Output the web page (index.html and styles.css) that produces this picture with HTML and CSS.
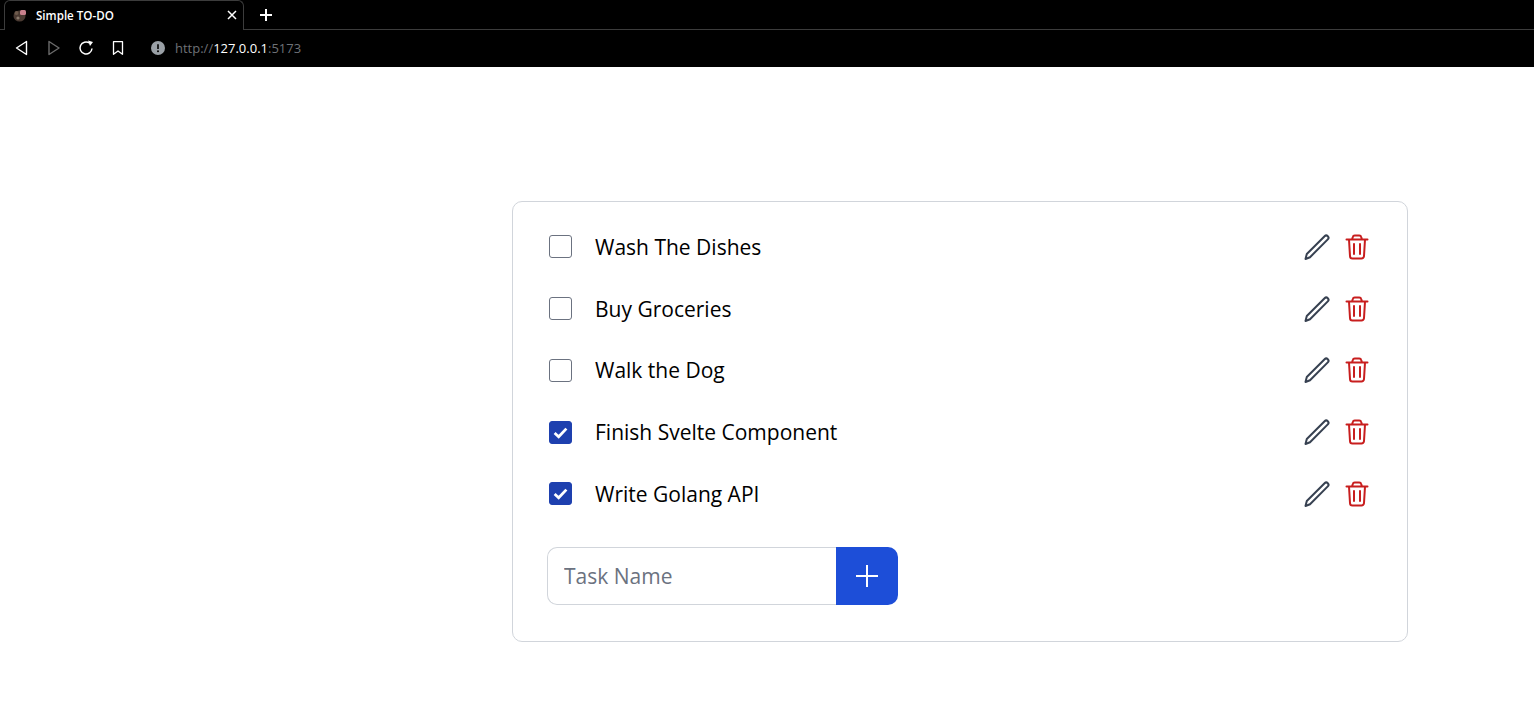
FILE: index.html

```html
<!DOCTYPE html>
<html lang="en">
<head>
<meta charset="UTF-8">
<meta name="viewport" content="width=device-width, initial-scale=1.0">
<title>Simple TO-DO</title>
<link rel="stylesheet" href="styles.css">
</head>
<body>

<!-- browser chrome -->
<div class="tabstrip">
    <div class="tab">
        <svg class="favicon" viewBox="0 0 15 14" width="15" height="14">
            <ellipse cx="6.5" cy="8" rx="6" ry="5.5" fill="#4a3a32"/>
            <circle cx="3.5" cy="5" r="2" fill="#6d5a4c"/>
            <rect x="7" y="2" width="6" height="5" rx="1.5" fill="#c9808c"/>
            <circle cx="5" cy="10" r="1.6" fill="#8a7a6c"/>
        </svg>
        <span class="tab-title">Simple TO-DO</span>
        <svg class="tab-close" viewBox="0 0 10 10" width="10" height="10">
            <path d="M1 1L9 9M9 1L1 9" stroke="#fff" stroke-width="1.5"/>
        </svg>
    </div>
    <svg class="new-tab" viewBox="0 0 14 14" width="14" height="14">
        <path d="M7 1V13M1 7H13" stroke="#fff" stroke-width="2"/>
    </svg>
</div>
<div class="toolbar">
    <svg class="nav-icon" viewBox="0 0 16 16" width="16" height="16">
        <path d="M12.5 1.5V14.5L2.5 8Z" fill="none" stroke="#fff" stroke-width="1.4" stroke-linejoin="round"/>
    </svg>
    <svg class="nav-icon" viewBox="0 0 16 16" width="16" height="16">
        <path d="M3 1.5V14.5L13 8Z" fill="none" stroke="#6b6b6b" stroke-width="1.4" stroke-linejoin="round"/>
    </svg>
    <svg class="nav-icon" viewBox="0 0 16 16" width="16" height="16">
        <path d="M14 8.5A6 6 0 1 1 11.4 3" fill="none" stroke="#fff" stroke-width="1.5"/>
        <path d="M10 0.5L15 2L12 6Z" fill="#fff"/>
    </svg>
    <svg class="nav-icon" viewBox="0 0 16 16" width="16" height="16">
        <path d="M3.5 1.7H12.5V14.3L8 11L3.5 14.3Z" fill="none" stroke="#fff" stroke-width="1.3" stroke-linejoin="round"/>
    </svg>
    <svg class="info-icon" viewBox="0 0 14 14" width="14" height="14">
        <circle cx="7" cy="7" r="7" fill="#9aa0a6"/>
        <path d="M7 3.2V8" stroke="#000" stroke-width="1.6"/>
        <circle cx="7" cy="10.2" r="1" fill="#000"/>
    </svg>
    <span class="url"><span class="url-dim">http://</span><span class="url-host">127.0.0.1</span><span class="url-dim">:5173</span></span>
</div>

<main class="page">
    <section class="card">
        <ul class="tasks">
            <li class="task">
                <span class="check"></span>
                <span class="task-name">Wash The Dishes</span>
                <span class="actions">
                    <svg class="icon edit" viewBox="0 0 28 28"><path d="M2.5 26L3.8 21L21.6 3.2A2 2 0 0 1 24.8 6.4L7 24.2Z"/></svg>
                    <svg class="icon trash" viewBox="0 0 28 28"><path d="M3.5 6.5H24.5M9 6.5L9.8 4A2 2 0 0 1 11.8 2.5H16.2A2 2 0 0 1 18.2 4L19 6.5M6 6.5L7 23A2.5 2.5 0 0 0 9.5 25.5H18.5A2.5 2.5 0 0 0 21 23L22 6.5M11 11V21M17 11V21"/></svg>
                </span>
            </li>
            <li class="task">
                <span class="check"></span>
                <span class="task-name">Buy Groceries</span>
                <span class="actions">
                    <svg class="icon edit" viewBox="0 0 28 28"><path d="M2.5 26L3.8 21L21.6 3.2A2 2 0 0 1 24.8 6.4L7 24.2Z"/></svg>
                    <svg class="icon trash" viewBox="0 0 28 28"><path d="M3.5 6.5H24.5M9 6.5L9.8 4A2 2 0 0 1 11.8 2.5H16.2A2 2 0 0 1 18.2 4L19 6.5M6 6.5L7 23A2.5 2.5 0 0 0 9.5 25.5H18.5A2.5 2.5 0 0 0 21 23L22 6.5M11 11V21M17 11V21"/></svg>
                </span>
            </li>
            <li class="task">
                <span class="check"></span>
                <span class="task-name">Walk the Dog</span>
                <span class="actions">
                    <svg class="icon edit" viewBox="0 0 28 28"><path d="M2.5 26L3.8 21L21.6 3.2A2 2 0 0 1 24.8 6.4L7 24.2Z"/></svg>
                    <svg class="icon trash" viewBox="0 0 28 28"><path d="M3.5 6.5H24.5M9 6.5L9.8 4A2 2 0 0 1 11.8 2.5H16.2A2 2 0 0 1 18.2 4L19 6.5M6 6.5L7 23A2.5 2.5 0 0 0 9.5 25.5H18.5A2.5 2.5 0 0 0 21 23L22 6.5M11 11V21M17 11V21"/></svg>
                </span>
            </li>
            <li class="task">
                <span class="check checked"><svg viewBox="0 0 14 14" width="15" height="15"><path d="M1.5 7.5L5.3 11L12.5 3.4" fill="none" stroke="#fff" stroke-width="2.6"/></svg></span>
                <span class="task-name">Finish Svelte Component</span>
                <span class="actions">
                    <svg class="icon edit" viewBox="0 0 28 28"><path d="M2.5 26L3.8 21L21.6 3.2A2 2 0 0 1 24.8 6.4L7 24.2Z"/></svg>
                    <svg class="icon trash" viewBox="0 0 28 28"><path d="M3.5 6.5H24.5M9 6.5L9.8 4A2 2 0 0 1 11.8 2.5H16.2A2 2 0 0 1 18.2 4L19 6.5M6 6.5L7 23A2.5 2.5 0 0 0 9.5 25.5H18.5A2.5 2.5 0 0 0 21 23L22 6.5M11 11V21M17 11V21"/></svg>
                </span>
            </li>
            <li class="task">
                <span class="check checked"><svg viewBox="0 0 14 14" width="15" height="15"><path d="M1.5 7.5L5.3 11L12.5 3.4" fill="none" stroke="#fff" stroke-width="2.6"/></svg></span>
                <span class="task-name">Write Golang API</span>
                <span class="actions">
                    <svg class="icon edit" viewBox="0 0 28 28"><path d="M2.5 26L3.8 21L21.6 3.2A2 2 0 0 1 24.8 6.4L7 24.2Z"/></svg>
                    <svg class="icon trash" viewBox="0 0 28 28"><path d="M3.5 6.5H24.5M9 6.5L9.8 4A2 2 0 0 1 11.8 2.5H16.2A2 2 0 0 1 18.2 4L19 6.5M6 6.5L7 23A2.5 2.5 0 0 0 9.5 25.5H18.5A2.5 2.5 0 0 0 21 23L22 6.5M11 11V21M17 11V21"/></svg>
                </span>
            </li>
        </ul>
        <form class="add-form">
            <input class="add-input" type="text" placeholder="Task Name">
            <button class="add-btn" type="button">
                <svg viewBox="0 0 24 24" width="24" height="24"><path d="M12 1V23M1 12H23" stroke="#fff" stroke-width="2"/></svg>
            </button>
        </form>
    </section>
</main>

</body>
</html>
```

FILE: styles.css

```css
* {
    box-sizing: border-box;
}

body {
    margin: 0;
    background: #fff;
    font-family: "Open Sans", "Noto Sans", sans-serif;
    height: 724px;
    overflow: hidden;
}

/* browser chrome */
.tabstrip {
    height: 30px;
    background: #000;
    display: flex;
    align-items: flex-end;
    border-bottom: 1px solid #3c3c3c;
}

.tab {
    width: 240px;
    height: 30px;
    margin-left: 4px;
    margin-bottom: -1px;
    padding: 0 6px 1px 8px;
    background: #000;
    border: 1px solid #3c3c3c;
    border-bottom: none;
    border-radius: 6px 6px 0 0;
    display: flex;
    align-items: center;
    color: #fff;
}

.favicon {
    flex: none;
}

.tab-title {
    margin-left: 8px;
    font-family: "Open Sans", sans-serif;
    font-size: 11.6px;
    font-weight: 600;
    flex: 1;
}

.new-tab {
    margin: 0 0 7px 15px;
}

.toolbar {
    height: 37px;
    background: #000;
    display: flex;
    align-items: center;
    padding: 0 0 2px 14px;
}

.nav-icon {
    margin-right: 16px;
    flex: none;
}

.info-icon {
    margin-left: 9px;
    flex: none;
}

.url {
    margin-left: 10px;
    font-family: "Open Sans", sans-serif;
    font-size: 13px;
}

.url-dim {
    color: #6e7176;
}

.url-host {
    color: #fff;
}

/* page */
.page {
    padding: 134px 0 0 512px;
}

.card {
    width: 896px;
    height: 441px;
    padding: 14px 36px 36px 36px;
    border: 1px solid #d1d5db;
    border-radius: 10px;
}

.tasks {
    list-style: none;
    margin: 0;
    padding: 0;
}

.task {
    height: 61.75px;
    display: flex;
    align-items: center;
}

.check {
    width: 23px;
    height: 23px;
    flex: none;
    border: 1px solid #6b7280;
    border-radius: 3px;
    display: flex;
    align-items: center;
    justify-content: center;
}

.checked {
    background: #1e40af;
    border-color: #1e40af;
}

.task-name {
    margin-left: 23px;
    font-size: 21px;
    color: #000;
    flex: 1;
}

.actions {
    display: flex;
    align-items: center;
    gap: 12px;
}

.icon {
    width: 28px;
    height: 28px;
    fill: none;
    stroke-width: 2;
    stroke-linecap: round;
    stroke-linejoin: round;
}

.edit {
    stroke: #374151;
}

.trash {
    stroke: #c81e1e;
}

.add-form {
    display: flex;
    margin: 22px 0 0 -2px;
}

.add-input {
    width: 289px;
    height: 58px;
    padding: 0 16px;
    font-family: inherit;
    font-size: 21px;
    color: #111;
    border: 1px solid #d1d5db;
    border-right: none;
    border-radius: 10px 0 0 10px;
    outline: none;
}

.add-input::placeholder {
    color: #6b7280;
}

.add-btn {
    width: 62px;
    height: 58px;
    padding: 0;
    background: #1d4ed8;
    border: none;
    border-radius: 0 10px 10px 0;
    display: flex;
    align-items: center;
    justify-content: center;
}
```
